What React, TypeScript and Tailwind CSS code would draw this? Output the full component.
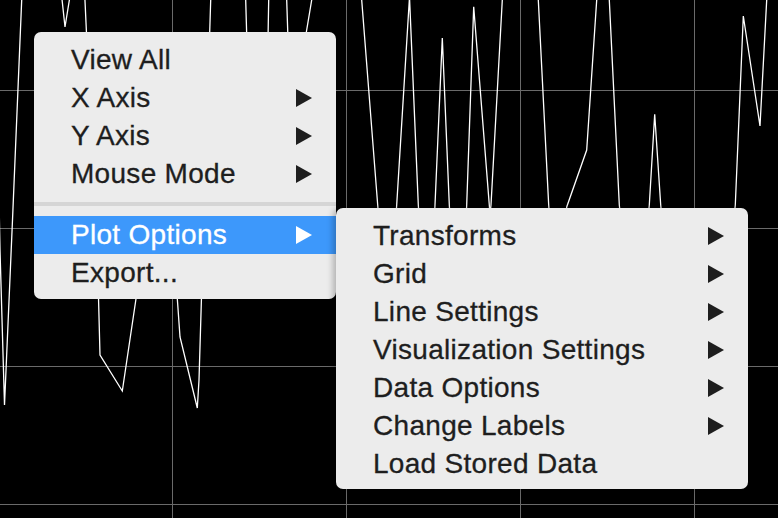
import React from "react";

const pts: [number, number][] = [
  [-5, 0], [0, 250], [4.5, 405], [12.5, 220], [21.7, 0], [30, -60], [61, -10], [65, 27], [71, -10], [78, -40],
  [84.5, -10], [98.3, 290], [100, 355], [122.3, 391], [137.3, 290], [150, 120], [165, 120],
  [176.7, 290], [180, 337], [197.3, 408], [199, 380], [201.7, 290], [210.7, 0], [212, -20],
  [244, -20], [245.7, 0], [250, 150], [266, 150], [268.7, 0], [270, -20], [285, -20], [286.7, 0],
  [290, 100], [300, 70], [311.7, 0], [315, -20], [360, -20], [361.7, 0], [377.7, 205], [385, 300],
  [390, 300], [396.7, 205], [409.5, -3], [418.3, 205], [425, 300], [430, 300], [435, 205],
  [442.3, 38], [449.3, 205], [455, 300], [462, 300], [466.7, 205], [473.7, 6.7], [489.3, 205],
  [490, 215], [491, 205], [502.3, 0], [505, -20], [535, -20], [538.3, 0], [548.7, 205], [555, 300],
  [560, 300], [566.7, 207], [586.7, 150], [596.7, 0], [600, -20], [606, -20], [609.3, 0],
  [619.3, 205], [630, 300], [640, 300], [649.3, 205], [654.7, 114.3], [660.7, 205], [670, 300],
  [725, 300], [735.3, 205], [743.3, 16], [760, 126], [766.7, 0], [770, -20], [780, -20],
];

function Arrow({ white }: { white?: boolean }) {
  return (
    <svg width="16" height="18" viewBox="0 0 16 18" className="shrink-0">
      <path d="M0 0 L16 9 L0 18 Z" fill={white ? "#ffffff" : "#1e1e1e"} />
    </svg>
  );
}

function Row({ label, arrow, active }: { label: string; arrow?: boolean; active?: boolean }) {
  return (
    <div
      className={
        active
          ? "flex h-[38px] items-center justify-between pl-[37px] pr-[24px] bg-[#3d98fb] text-white"
          : "flex h-[38px] items-center justify-between pl-[37px] pr-[24px] text-[#1e1e1e]"
      }
    >
      <span className="leading-[38px] whitespace-nowrap">{label}</span>
      {arrow ? <Arrow white={active} /> : null}
    </div>
  );
}

export default function App() {
  return (
    <div className="relative w-[778px] h-[518px] overflow-hidden bg-black font-['Liberation_Sans',Arial,sans-serif] text-[28px] tracking-[0.3px] [-webkit-text-stroke:0.3px]">
      <svg className="absolute inset-0" width="778" height="518" viewBox="0 0 778 518">
        {[172.5, 346.5, 520.5, 694.5].map((x) => (
          <line key={"v" + x} x1={x} y1={0} x2={x} y2={518} stroke="#6a6a6a" strokeWidth={1} />
        ))}
        {[90.5, 228.5, 366.5, 504.5].map((y) => (
          <line key={"h" + y} x1={0} y1={y} x2={778} y2={y} stroke="#6a6a6a" strokeWidth={1} />
        ))}
        <polyline
          points={pts.map((p) => p.join(",")).join(" ")}
          fill="none"
          stroke="#ffffff"
          strokeWidth={1.3}
          strokeLinejoin="miter"
        />
      </svg>

      <div className="absolute left-[34px] top-[32px] w-[302px] rounded-[7px] bg-[#ececec] pt-[9px] pb-[7px] overflow-hidden">
        <Row label="View All" />
        <Row label="X Axis" arrow />
        <Row label="Y Axis" arrow />
        <Row label="Mouse Mode" arrow />
        <div className="mt-[9px] mb-[10px] h-[4px] bg-[#d5d5d5]" />
        <Row label="Plot Options" arrow active />
        <Row label="Export..." />
      </div>

      <div className="absolute left-[336px] top-[208px] w-[412px] rounded-[7px] bg-[#ececec] pt-[9px] pb-[6px] shadow-[-3px_0_6px_rgba(0,0,0,0.25)]">
        <Row label="Transforms" arrow />
        <Row label="Grid" arrow />
        <Row label="Line Settings" arrow />
        <Row label="Visualization Settings" arrow />
        <Row label="Data Options" arrow />
        <Row label="Change Labels" arrow />
        <Row label="Load Stored Data" />
      </div>
    </div>
  );
}
